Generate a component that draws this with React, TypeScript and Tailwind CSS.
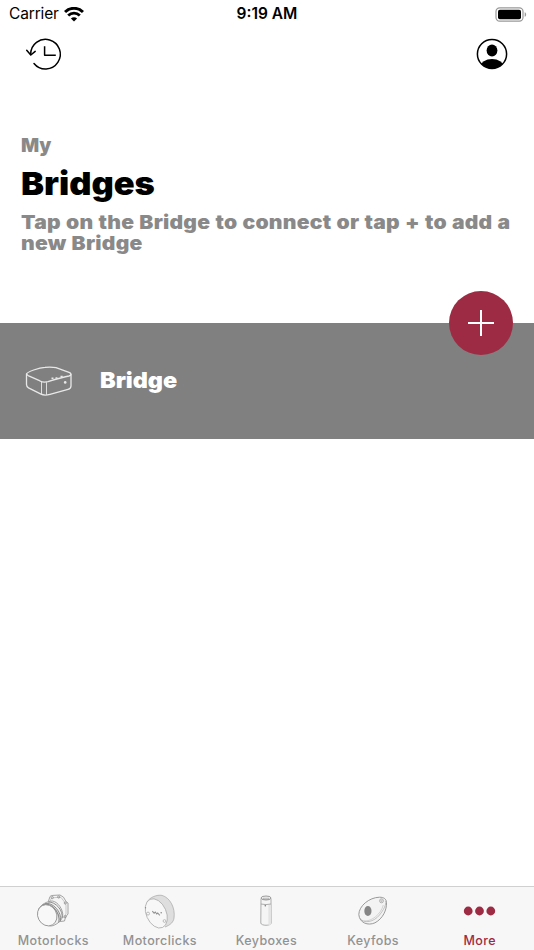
import type { ReactNode } from "react";

interface TabItem {
  label: string;
  icon: ReactNode;
  active?: boolean;
}

function WifiIcon() {
  return (
    <svg className="h-[15px] w-[20px]" viewBox="0 0 20 15" fill="none" stroke="black">
      <path d="M1 5.1C6 0 14 0 19 5.1" strokeWidth={2.9} />
      <path d="M4.2 8.5C7.5 5.2 12.5 5.2 15.8 8.5" strokeWidth={2.8} />
      <path d="M10 14.6L6.9 11.5C8.7 9.8 11.3 9.8 13.1 11.5Z" fill="black" stroke="none" />
    </svg>
  );
}

function BatteryIcon() {
  return (
    <svg className="h-[15px] w-[32px]" viewBox="0 0 32 15" fill="none">
      <rect x="1" y="0.8" width="27" height="13.4" rx="3.6" stroke="#999" strokeWidth={1.2} />
      <rect x="3" y="2.8" width="23" height="9.4" rx="1.8" fill="black" />
      <path d="M29.7 5.2C31.6 5.8 31.6 9.2 29.7 9.8Z" fill="#999" />
    </svg>
  );
}

function HistoryIcon() {
  return (
    <svg
      className="h-[34px] w-[38px]"
      viewBox="0 0 38 34"
      fill="none"
      stroke="black"
      strokeWidth={1.5}
      strokeLinecap="round"
      strokeLinejoin="round"
    >
      <path d="M5.7 17.5A14.8 14.8 0 1 1 9 26.5" />
      <path d="M1.7 13.2L5.8 18L10.2 14.4" />
      <path d="M19.6 9.2V18.2H30.8" strokeLinecap="butt" />
    </svg>
  );
}

function ProfileIcon() {
  return (
    <svg className="h-[32px] w-[32px]" viewBox="0 0 32 32">
      <defs>
        <clipPath id="profile-clip">
          <circle cx="16" cy="16" r="14.5" />
        </clipPath>
      </defs>
      <ellipse cx="16" cy="12.5" rx="5.4" ry="6.1" fill="black" />
      <ellipse cx="16" cy="28.5" rx="11.5" ry="7.6" fill="black" clipPath="url(#profile-clip)" />
      <circle cx="16" cy="16" r="14.6" fill="none" stroke="black" strokeWidth={1.5} />
    </svg>
  );
}

function BridgeIcon() {
  return (
    <svg
      className="h-[31px] w-[48px]"
      viewBox="0 0 48 31"
      fill="none"
      stroke="#e8e8e8"
      strokeWidth={1.3}
      strokeLinejoin="round"
    >
      <path d="M1.5 8C2 6 14 1.6 20 1.3C25 .9 28 1 31 1.7L44 6.3C46 7 46.2 7.7 46 9V20C46 22 45 22.8 43 23.4L25 28.4C22 29.2 18 29.2 16 28.2L3.5 21.8C2 21 1.5 20.2 1.5 18.5Z" />
      <path d="M1.5 7.5C1.5 9 2.5 9.3 3.7 9.9L14.5 14.7C17 16.2 20 16.5 23 15.7C30 13.5 38 11 44 10C45.5 9.7 46 9 46 8" />
      <path d="M16.5 15.8V28.4M21.5 16.2V28.8" strokeWidth={0.9} />
      <path d="M26.5 12.2h2M30.5 12h2M35.5 10.5h2.2" strokeWidth={1.4} />
      <circle cx="40.2" cy="16.4" r="1.3" fill="#e8e8e8" stroke="none" />
    </svg>
  );
}

function MotorlockIcon() {
  return (
    <svg className="h-[34px] w-[34px]" viewBox="0 0 34 34" fill="none" stroke="#8e8e8e" strokeWidth={0.8}>
      <path
        d="M12.5 7L14 2.5Q15 1.3 17 1.4L24 1L27.5 3.2L30 7.5L32 9V20L29.5 23L28.5 27L24 27.5"
        fill="#f5f5f5"
      />
      <path d="M14 7L15.5 4L20 3.5L25 3.4L28.5 8L30 11V20L27 24" stroke="#bbb" />
      <circle cx="16.3" cy="3.6" r="1.1" />
      <circle cx="22.7" cy="3" r="1.1" />
      <circle cx="29.3" cy="9" r="1.1" />
      <circle cx="29.2" cy="22.7" r="1.1" />
      <path
        d="M2.5 15.5C5 10 12 7 16.5 7C22 7.8 27.5 16 26.7 22C26 27 19 32 14.5 32C8 31.5 1.5 23 2.5 15.5Z"
        fill="#f0f0f0"
      />
      <path d="M6.5 11C14 7.5 25 18 22.8 28.5" strokeWidth={1.2} />
      <path d="M9 9.5C17 8 26 18 24.5 27M12 8C20 7.5 27.5 17 26 24" strokeWidth={1} />
      <ellipse cx="11.2" cy="21.3" rx="9.4" ry="10.9" transform="rotate(-28 11.2 21.3)" fill="#f8f8f8" />
    </svg>
  );
}

function MotorclickIcon() {
  return (
    <svg className="h-[35px] w-[34px]" viewBox="0 0 34 35" fill="none" stroke="#a5a5a5" strokeWidth={0.7}>
      <path
        d="M4 8C7 3 14 .5 19 1.4C27 3.5 32.5 14 31 24C30.5 28 27.5 31 22 33"
        fill="#dedede"
      />
      <ellipse cx="13.3" cy="19.4" rx="10" ry="15.4" transform="rotate(-24 13.3 19.4)" fill="#f7f7f7" />
      <circle cx="5" cy="19.6" r="1.5" />
      <circle cx="21.5" cy="27" r="1.4" />
      <circle cx="18.2" cy="18.8" r="0.8" fill="#8b8b8b" stroke="none" />
      <circle cx="2.5" cy="13.7" r="0.7" fill="#8b8b8b" stroke="none" />
      <path d="M9.3 17.2l1.8 2 1.2-1.2 1.4 2 1-1 2.1 2.3" stroke="#929292" strokeWidth={1.1} />
    </svg>
  );
}

function KeyboxIcon() {
  return (
    <svg className="h-[32px] w-[14px]" viewBox="0 0 14 32" fill="none" stroke="#9a9a9a" strokeWidth={0.8}>
      <path d="M2 3.5L1.8 28C2 31 12 31 12.2 28L12 3.5" fill="#f5f5f5" />
      <path d="M9.4 10V30H10.5Q12.2 29.5 12.2 28L12 9Z" fill="#e4e4e4" stroke="none" />
      <ellipse cx="7" cy="3" rx="5" ry="2" fill="#ededed" stroke="#858585" />
      <path d="M4 4.5H10V3.3H4Z" strokeWidth={0.6} />
      <path d="M1.9 9Q7 10.2 12 9" />
      <circle cx="6.3" cy="10.7" r="0.8" fill="#777" stroke="none" />
    </svg>
  );
}

function KeyfobIcon() {
  return (
    <svg className="h-[30px] w-[31px]" viewBox="0 0 31 30" fill="none" stroke="#8e8e8e" strokeWidth={0.9}>
      <path
        d="M.8 18.5C1 10 11 1.5 21.5 1.2C26 1.2 28.3 3 28.5 6.5C28.8 14 25 22.5 17 26.8C10 30 1.5 27 .8 18.5Z"
        fill="#f3f3f3"
      />
      <path d="M2.2 22.5C6 28 16 26 21.5 19C25.5 14 28.3 9 27.7 5" strokeWidth={0.5} />
      <path d="M6 25C14 25.5 23 18 25.3 9" stroke="#bbb" strokeWidth={0.6} />
      <ellipse cx="9.9" cy="15" rx="3.6" ry="4.9" fill="#858585" stroke="none" />
      <circle cx="23.5" cy="4.8" r="2" strokeWidth={0.6} />
      <circle cx="23.5" cy="4.8" r="0.8" strokeWidth={0.5} />
    </svg>
  );
}

function MoreIcon() {
  return (
    <svg className="h-[10px] w-[33px]" viewBox="0 0 33 10" fill="#9d2b43">
      <circle cx="5.2" cy="5" r="4.4" />
      <circle cx="16.5" cy="5" r="4.4" />
      <circle cx="27.8" cy="5" r="4.4" />
    </svg>
  );
}

const TABS: TabItem[] = [
  { label: "Motorlocks", icon: <MotorlockIcon /> },
  { label: "Motorclicks", icon: <MotorclickIcon /> },
  { label: "Keyboxes", icon: <KeyboxIcon /> },
  { label: "Keyfobs", icon: <KeyfobIcon /> },
  { label: "More", icon: <MoreIcon />, active: true },
];

function StatusBar() {
  return (
    <div className="grid h-7 grid-cols-3 items-center pr-[7px] pl-[9px] text-[15.5px]">
      <div className="flex items-center gap-[5px] tracking-[-0.15px]">
        <span>Carrier</span>
        <WifiIcon />
      </div>
      <span className="pr-[2px] text-center font-semibold">9:19 AM</span>
      <div className="flex justify-end">
        <BatteryIcon />
      </div>
    </div>
  );
}

function TabBar() {
  return (
    <nav className="grid h-16 grid-cols-5 border-t border-[#d0d0d0] bg-[#f7f7f7] pr-px">
      {TABS.map(({ label, icon, active }) => (
        <button key={label} className="flex flex-col items-center pt-[6px]">
          <span className="flex h-9 items-center justify-center">{icon}</span>
          <span
            className={`mt-[4px] text-[12.5px] leading-4 font-medium tracking-[0.4px] ${
              active ? "text-[#9d2b43]" : "text-[#929292]"
            }`}
          >
            {label}
          </span>
        </button>
      ))}
    </nav>
  );
}

export default function App() {
  return (
    <div className="flex h-[950px] w-[534px] flex-col overflow-hidden bg-white font-['Inter',sans-serif] text-black">
      <StatusBar />

      <header className="flex h-[52px] items-center justify-between pr-[26px] pl-[25px]">
        <button aria-label="History">
          <HistoryIcon />
        </button>
        <button aria-label="Profile">
          <ProfileIcon />
        </button>
      </header>

      <section className="h-[243px] pt-[55px] pl-[21px]">
        <p className="text-[19px] leading-[22px] font-black tracking-[-0.3px] text-[#898989]">My</p>
        <h1 className="mt-[8px] origin-left scale-x-[1.077] text-[32px] leading-[38px] font-black">Bridges</h1>
        <p className="mt-[10px] w-[450px] origin-left scale-x-[1.11] text-[19px] leading-[20.5px] font-black tracking-[0.22px] text-[#898989] [word-spacing:0.6px]">
          Tap on the Bridge to connect or tap + to add a new Bridge
        </p>
      </section>

      <main className="flex-1">
        <div className="relative flex h-[116px] items-center bg-[#808080] pl-[25px]">
          <BridgeIcon />
          <span className="ml-[27px] origin-left scale-x-[1.065] pb-px text-[22px] font-black text-white">
            Bridge
          </span>
          <button
            aria-label="Add bridge"
            className="absolute -top-8 right-[21px] flex size-[64px] items-center justify-center rounded-full bg-[#9d2b43]"
          >
            <svg className="size-[28px]" viewBox="0 0 28 28" stroke="white" strokeWidth={2}>
              <path d="M14 1V27M1 14H27" />
            </svg>
          </button>
        </div>
      </main>

      <TabBar />
    </div>
  );
}
